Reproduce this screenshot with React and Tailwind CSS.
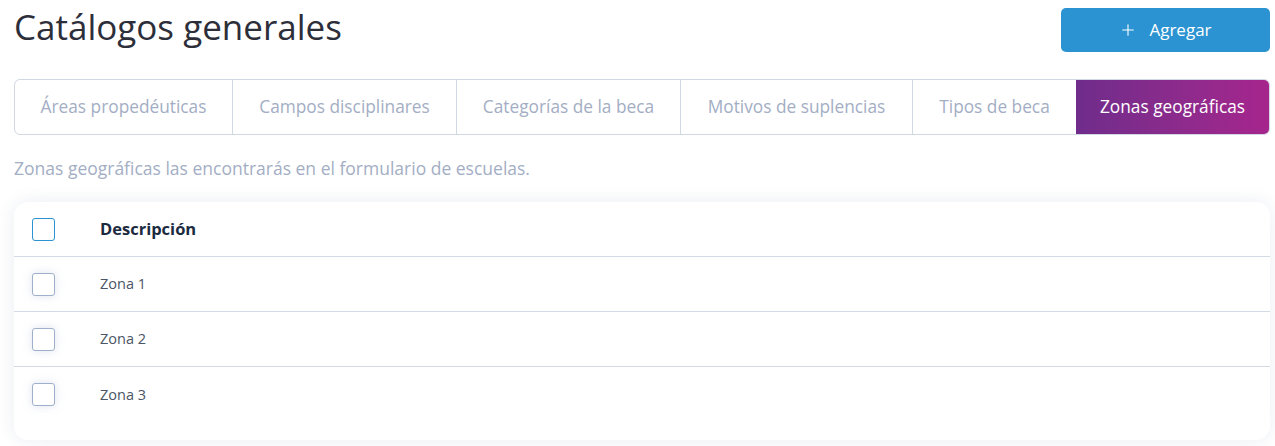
import React from 'react';
import { Plus } from 'lucide-react';

const tabs = [
  { label: 'Áreas propedéuticas', w: 'w-[217px]' },
  { label: 'Campos disciplinares', w: 'w-[224px]' },
  { label: 'Categorías de la beca', w: 'w-[224px]' },
  { label: 'Motivos de suplencias', w: 'w-[232px]' },
  { label: 'Tipos de beca', w: 'w-[164px]' },
  { label: 'Zonas geográficas', w: 'flex-1', active: true },
];

const rows = ['Zona 1', 'Zona 2', 'Zona 3'];

const Checkbox = ({ header }) => (
  <div
    className={
      header
        ? 'w-[23px] h-[23px] rounded-[3px] border-[1.5px] border-[#2b93d1] bg-white'
        : 'w-[23px] h-[23px] rounded-[3px] border border-[#9fb0cf] bg-white shadow-[0_0_8px_rgba(160,176,210,0.35)]'
    }
  />
);

const App = () => {
  return (
    <div className="w-[1275px] h-[446px] bg-white pl-[14px] pr-[5px] pt-[8px] font-['Open_Sans',sans-serif] overflow-hidden">
      <div className="flex items-start justify-between h-[44px]">
        <h1 className="text-[35px] leading-[44px] text-[#2c2e3a] -mt-[3px]">Catálogos generales</h1>
        <button className="w-[209px] h-[44px] bg-[#2b93d1] rounded-[5px] flex items-center justify-center gap-[12px] text-white text-[17px]">
          <Plus size={18} strokeWidth={1.5} />
          <span>Agregar</span>
        </button>
      </div>

      <div className="mt-[27px] h-[56px] flex border border-[#cfd8e3] rounded-[6px] overflow-hidden">
        {tabs.map((t, i) => (
          <div
            key={t.label}
            className={
              t.active
                ? `${t.w} flex items-center justify-center text-[17.3px] text-white bg-gradient-to-r from-[#6f2c8b] to-[#a6258d]`
                : `${t.w} flex items-center justify-center text-[17.3px] text-[#a3aec4] ${i > 0 ? 'border-l border-[#cfd8e3]' : ''}`
            }
          >
            {t.label}
          </div>
        ))}
      </div>

      <p className="mt-[22px] text-[17.5px] leading-[22px] text-[#a3aec4]">
        Zonas geográficas las encontrarás en el formulario de escuelas.
      </p>

      <div className="mt-[23px] h-[238px] bg-white rounded-[14px] shadow-[0_0_18px_rgba(30,50,110,0.09)]">
        <div className="h-[55px] flex items-center pl-[18px] border-b border-[#d3dae5]">
          <Checkbox header />
          <span className="ml-[45px] text-[16.5px] font-bold text-[#1c2a40]">Descripción</span>
        </div>
        {rows.map((r, i) => (
          <div
            key={r}
            className={`h-[55px] flex items-center pl-[18px] ${i < rows.length - 1 ? 'border-b border-[#d3dae5]' : ''}`}
          >
            <Checkbox />
            <span className="ml-[45px] text-[14.5px] text-[#4b5566]">{r}</span>
          </div>
        ))}
      </div>
    </div>
  );
};

export default App;
